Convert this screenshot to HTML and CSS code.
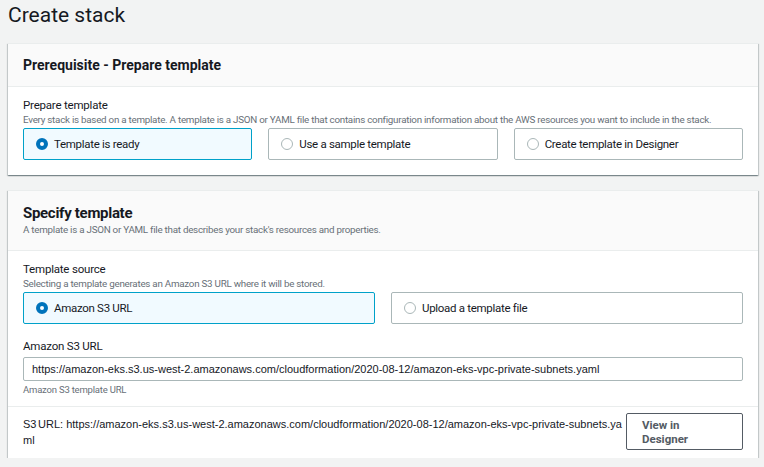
FILE: index.html
```html
<!DOCTYPE html>
<html lang="en">
<head>
<meta charset="utf-8">
<title>Create stack</title>
<link rel="stylesheet" href="styles.css">
</head>
<body>
<h1 class="page-title">Create stack</h1>

<section class="panel">
  <header class="panel-header">
    <h2 class="panel-title">Prerequisite - Prepare template</h2>
  </header>
  <div class="panel-body">
    <div class="field-label">Prepare template</div>
    <div class="field-desc">Every stack is based on a template. A template is a JSON or YAML file that contains configuration information about the AWS resources you want to include in the stack.</div>
    <div class="tiles tiles-3">
      <div class="tile selected"><span class="radio checked"></span><span>Template is ready</span></div>
      <div class="tile"><span class="radio"></span><span>Use a sample template</span></div>
      <div class="tile"><span class="radio"></span><span>Create template in Designer</span></div>
    </div>
  </div>
</section>

<section class="panel panel-second">
  <header class="panel-header header-tall">
    <h2 class="panel-title big">Specify template</h2>
    <div class="header-desc">A template is a JSON or YAML file that describes your stack's resources and properties.</div>
  </header>
  <div class="panel-body body-second">
    <div class="field-label">Template source</div>
    <div class="field-desc">Selecting a template generates an Amazon S3 URL where it will be stored.</div>
    <div class="tiles tiles-2">
      <div class="tile selected"><span class="radio checked"></span><span>Amazon S3 URL</span></div>
      <div class="tile"><span class="radio"></span><span>Upload a template file</span></div>
    </div>
    <div class="field-label url-label">Amazon S3 URL</div>
    <div class="input">https://amazon-eks.s3.us-west-2.amazonaws.com/cloudformation/2020-08-12/amazon-eks-vpc-private-subnets.yaml</div>
    <div class="hint">Amazon S3 template URL</div>
  </div>
  <footer class="panel-footer">
    <div class="s3-line">S3 URL:&nbsp; https://amazon-eks.s3.us-west-2.amazonaws.com/cloudformation/2020-08-12/amazon-eks-vpc-private-subnets.yaml</div>
    <button class="btn">View in Designer</button>
  </footer>
</section>
</body>
</html>
```

FILE: styles.css
```css
* { box-sizing: border-box; }

body {
  margin: 0;
  padding: 0 6px 0 8px;
  background: #f2f3f3;
  font-family: Roboto, "Noto Sans", sans-serif;
  color: #16191f;
}

.page-title {
  margin: 0 0 12px;
  font-size: 21px;
  line-height: 31px;
  font-weight: 400;
  color: #16191f;
}

.panel {
  background: #fff;
  border-top: 1px solid #eaeded;
  box-shadow: 0 1px 1px 0 rgba(0, 28, 36, 0.3), 1px 1px 1px 0 rgba(0, 28, 36, 0.15), -1px 1px 1px 0 rgba(0, 28, 36, 0.15);
}

.panel-second { margin-top: 15px; }

.panel-header {
  background: #fafafa;
  border-bottom: 1px solid #eaeded;
  height: 43px;
  padding: 0 15px;
  display: flex;
  align-items: center;
}

.header-tall {
  height: 60px;
  flex-direction: column;
  align-items: flex-start;
  justify-content: flex-start;
  padding-top: 12px;
}

.panel-title {
  margin: 0;
  font-size: 14px;
  font-weight: 700;
  line-height: 20px;
}

.panel-title.big {
  font-size: 15px;
  letter-spacing: -0.3px;
}

.header-desc {
  font-size: 9.8px;
  letter-spacing: -0.25px;
  line-height: 14px;
  color: #687078;
}

.panel-body {
  padding: 9px 15px 15px;
}

.body-second { padding-bottom: 10px; }

.field-label {
  font-size: 11.5px;
  letter-spacing: -0.2px;
  line-height: 18px;
}

.field-desc {
  font-size: 9.8px;
  letter-spacing: -0.25px;
  line-height: 12px;
  color: #687078;
  white-space: nowrap;
}

.tiles {
  margin-top: 2px;
  display: grid;
  gap: 16px;
}

.tiles-3 { grid-template-columns: repeat(3, 1fr); }
.tiles-2 { grid-template-columns: repeat(2, 1fr); }

.tile {
  height: 32px;
  border: 1px solid #aab7b8;
  border-radius: 2px;
  background: #fff;
  display: flex;
  align-items: center;
  gap: 6px;
  padding-left: 12px;
  font-size: 11.5px;
  letter-spacing: -0.3px;
}

.tile.selected {
  background: #f1faff;
  border-color: #00a1c9;
}

.radio {
  width: 12px;
  height: 12px;
  border-radius: 50%;
  border: 1px solid #aab7b8;
  background: #fff;
  flex: none;
}

.radio.checked {
  border: 4px solid #0073bb;
}

.url-label { margin-top: 13px; }

.input {
  margin-top: 2px;
  height: 24px;
  border: 1px solid #aab7b8;
  border-radius: 2px;
  padding: 0 8px;
  display: flex;
  align-items: center;
  font-family: "Liberation Sans", Arial, sans-serif;
  font-size: 11px;
  white-space: nowrap;
  overflow: hidden;
}

.hint {
  margin-top: 3px;
  font-size: 9.5px;
  letter-spacing: -0.2px;
  line-height: 12px;
  color: #687078;
}

.panel-footer {
  border-top: 1px solid #eaeded;
  padding: 6px 15px 8px;
  display: flex;
  align-items: flex-start;
  gap: 2px;
}

.s3-line {
  flex: 1;
  margin-top: 3px;
  font-family: "Liberation Sans", Arial, sans-serif;
  font-size: 11px;
  line-height: 16px;
  word-spacing: -1.5px;
  word-break: break-all;
}

.btn {
  flex: none;
  width: 117px;
  height: 37px;
  border: 1px solid #545b64;
  border-radius: 2px;
  background: #fff;
  color: #545b64;
  font-family: inherit;
  font-weight: 700;
  font-size: 11.5px;
  line-height: 14px;
  text-align: left;
  padding: 0 15px;
}
```
